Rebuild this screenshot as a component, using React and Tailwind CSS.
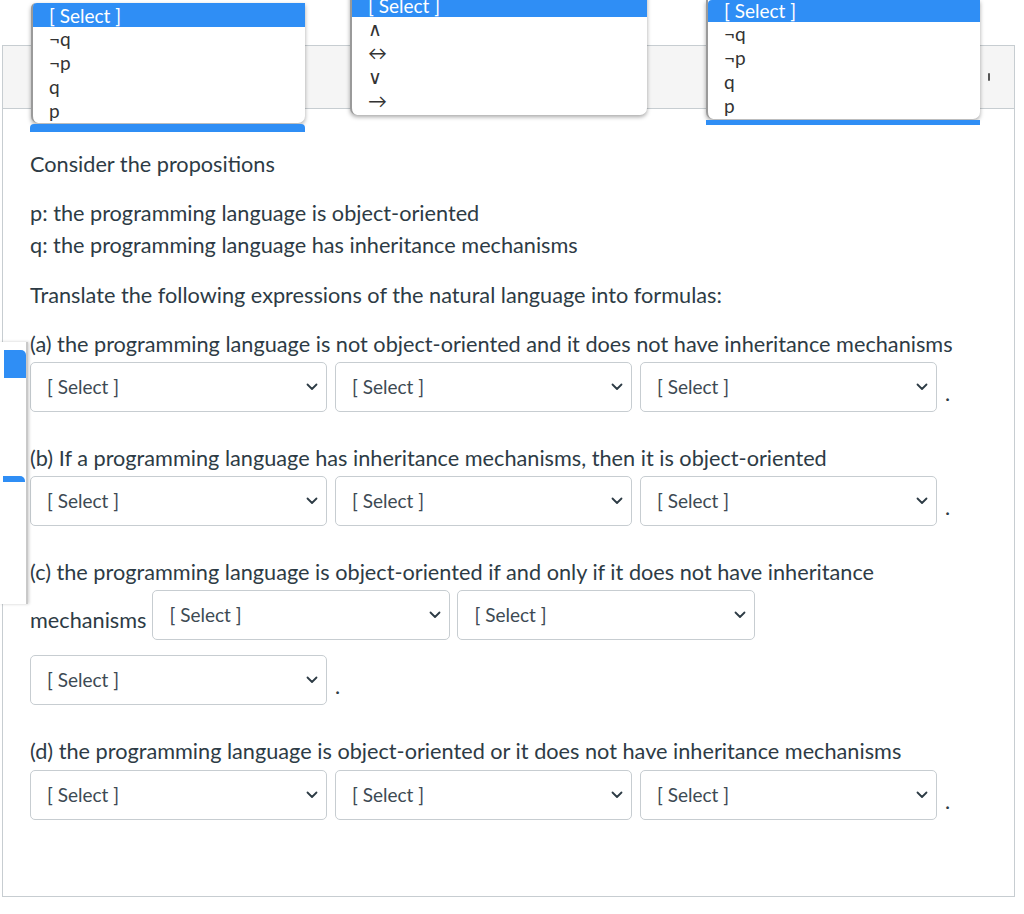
import React from 'react';

const Chevron = () => (
  <svg width="12" height="8" viewBox="0 0 12 8" fill="none" className="shrink-0">
    <path d="M1.5 1.5 L6 6 L10.5 1.5" stroke="#2d3b45" strokeWidth="1.8" strokeLinecap="round" strokeLinejoin="round" />
  </svg>
);

const Select = ({ w = 'w-[297px]' }) => (
  <div className={`${w} h-[50px] shrink-0 flex items-center justify-between pl-[16px] pr-[8px] border border-[#c7cdd1] rounded-[5px] bg-white text-[19px] text-[#3d4a53]`}>
    <span>[ Select ]</span>
    <Chevron />
  </div>
);

const Dot = ({ className = '' }) => <span className={`self-end mb-[3px] leading-[32px] ${className}`}>.</span>;

const Row3 = ({ className = '' }) => (
  <div className={`flex gap-[8px] ${className}`}>
    <Select />
    <Select />
    <Select />
    <Dot />
  </div>
);

// open option list, drawn over the page
const OptionList = ({ className, items, headerClass = 'h-[24px]' }) => (
  <div className={`absolute bg-white border-l-2 border-[#9a9a9a] rounded-b-[7px] shadow-[0_2px_4px_rgba(0,0,0,0.35)] font-[Lato,sans-serif] text-[19px] text-[#333] ${className}`}>
    <div className={`${headerClass} bg-[#2f8ef5] text-white pl-[16px] leading-[22px] rounded-tl-[4px] flex items-end`}>[ Select ]</div>
    {items.map((it, i) => (
      <div key={i} className="h-[24px] leading-[24px] pl-[16px]">{it}</div>
    ))}
  </div>
);

export default function App() {
  const vars = ['¬q', '¬p', 'q', 'p'];
  const ops = ['∧', '↔', '∨', '→'];

  return (
    <div className="relative w-[1024px] h-[914px] bg-white overflow-hidden font-[Lato,sans-serif] text-[#2d3b45]">
      <div className="ml-[2px] mt-[45px] w-[1013px] h-[852px] border border-[#c7cdd1]">
        <div className="h-[63px] bg-[#f5f5f5] border-b border-[#c7cdd1] flex items-center justify-end pr-[24px]">
          <div className="w-[2px] h-[8px] bg-[#555] rounded-full" />
        </div>

        <div className="pl-[27px] pt-[39px] text-[21.7px] leading-[32px]">
          <p>Consider the propositions</p>
          <div className="mt-[17px]">
            <p>p: the programming language is object-oriented</p>
            <p>q: the programming language has inheritance mechanisms</p>
          </div>
          <p className="mt-[18px]">Translate the following expressions of the natural language into formulas:</p>

          <p className="mt-[17px]">(a) the programming language is not object-oriented and it does not have inheritance mechanisms</p>
          <Row3 className="mt-[2px]" />

          <p className="mt-[30px]">(b) If a programming language has inheritance mechanisms, then it is object-oriented</p>
          <Row3 className="mt-[2px]" />

          <p className="mt-[30px]">(c) the programming language is object-oriented if and only if it does not have inheritance</p>
          <div className="flex items-start mt-[2px]">
            <span className="pt-[14px] mr-[6px]">mechanisms</span>
            <Select w="w-[298px]" />
            <div className="ml-[7px]">
              <Select w="w-[298px]" />
            </div>
          </div>
          <div className="flex mt-[15px]">
            <Select />
            <Dot className="ml-[8px]" />
          </div>

          <p className="mt-[30px]">(d) the programming language is object-oriented or it does not have inheritance mechanisms</p>
          <Row3 className="mt-[3px]" />
        </div>
      </div>

      {/* open dropdowns */}
      <OptionList className="left-[31px] top-[3px] w-[274px] h-[120px] rounded-tl-[5px]" items={vars} />
      <div className="absolute left-[30px] top-[124px] w-[275px] h-[8px] bg-[#2f8ef5] rounded-t-[4px]" />

      <OptionList className="left-[350px] top-[-7px] w-[297px] h-[122px] border-l-0" headerClass="h-[24px]" items={ops} />

      <OptionList className="left-[706px] top-0 w-[274px] h-[119px]" headerClass="h-[22px]" items={vars} />
      <div className="absolute left-[706px] top-[120px] w-[274px] h-[5px] bg-[#2f8ef5]" />

      {/* clipped list at the left edge */}
      <div className="absolute left-0 top-[342px] w-[28px] h-[262px] bg-white border-r-2 border-[#c9c9c9] shadow-[1px_0_3px_rgba(0,0,0,0.2)]">
        <div className="ml-[4px] mt-[8px] w-[22px] h-[28px] bg-[#2f8ef5] rounded-tr-[5px]" />
        <div className="ml-[3px] mt-[98px] w-[22px] h-[6px] bg-[#2f8ef5] rounded-tr-[5px]" />
      </div>
    </div>
  );
}
